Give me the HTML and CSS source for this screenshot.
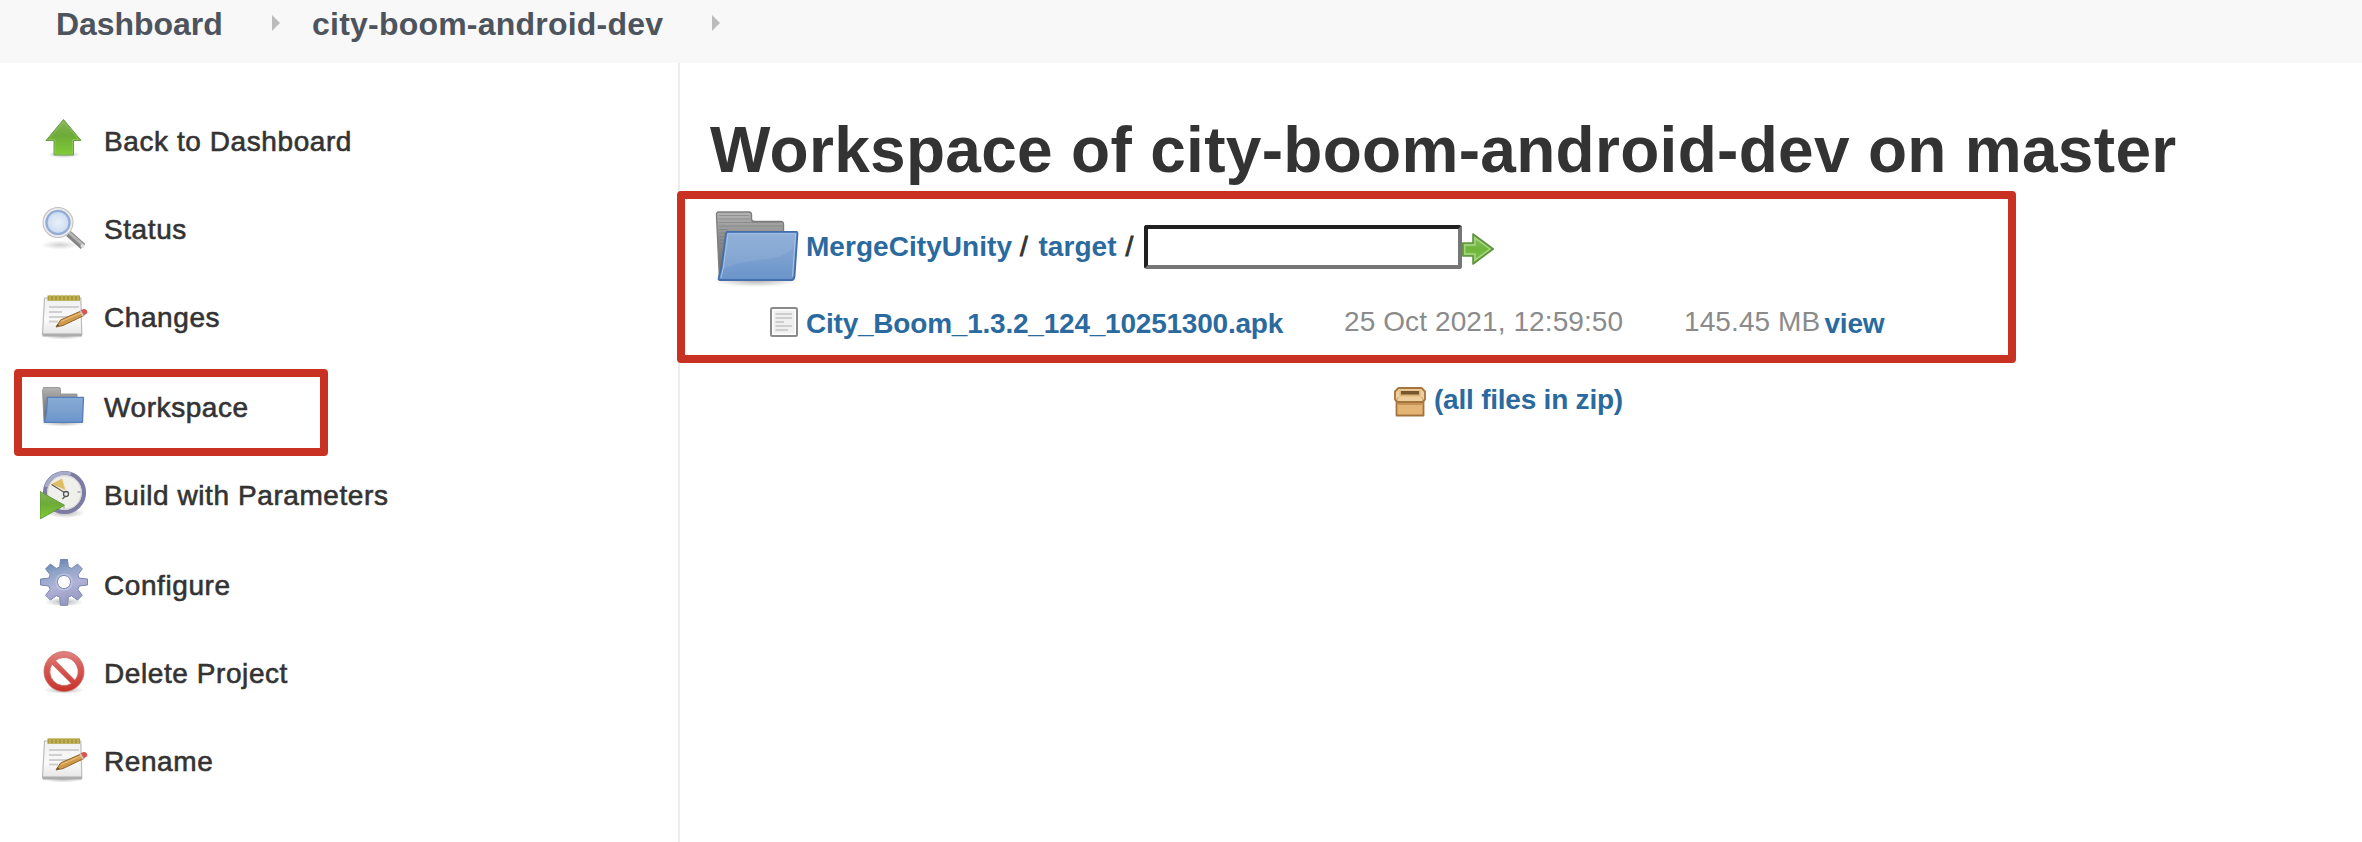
FILE: index.html
```html
<!DOCTYPE html>
<html lang="en">
<head>
<meta charset="utf-8">
<title>Workspace of city-boom-android-dev on master</title>
<link rel="stylesheet" href="styles.css">
</head>
<body>
<svg class="defs" width="0" height="0" aria-hidden="true">
  <defs>
    <linearGradient id="green" x1="0" y1="0" x2="0" y2="1"><stop offset="0" stop-color="#86b457"/><stop offset=".45" stop-color="#6dab38"/><stop offset="1" stop-color="#80cd35"/></linearGradient>
    <linearGradient id="go-green" x1="0" y1="0" x2="0" y2="1"><stop offset="0" stop-color="#8cc36a"/><stop offset=".5" stop-color="#6fb63a"/><stop offset="1" stop-color="#83c24f"/></linearGradient>
    <linearGradient id="blue" x1="0" y1="0" x2="0" y2="1"><stop offset="0" stop-color="#88abd6"/><stop offset=".55" stop-color="#7ba0cf"/><stop offset="1" stop-color="#6a94ca"/></linearGradient>
    <linearGradient id="gray" x1="0" y1="0" x2="0" y2="1"><stop offset="0" stop-color="#b4b4b4"/><stop offset=".4" stop-color="#8b8b8b"/><stop offset="1" stop-color="#666"/></linearGradient>
    <linearGradient id="paper" x1="0" y1="0" x2="0" y2="1"><stop offset="0" stop-color="#f0f0f0"/><stop offset=".6" stop-color="#fafafa"/><stop offset="1" stop-color="#e6e6e6"/></linearGradient>
    <linearGradient id="red" x1="0" y1="0" x2="0" y2="1"><stop offset="0" stop-color="#df8682"/><stop offset=".4" stop-color="#d65a56"/><stop offset="1" stop-color="#c9322b"/></linearGradient>
    <linearGradient id="steel" x1="0" y1="0" x2=".3" y2="1"><stop offset="0" stop-color="#5878a6"/><stop offset=".35" stop-color="#91a4c8"/><stop offset=".65" stop-color="#b1b2d6"/><stop offset="1" stop-color="#9a9cc4"/></linearGradient>
    <radialGradient id="glass"><stop offset="0" stop-color="#e9f1fa"/><stop offset=".65" stop-color="#d2e0f3"/><stop offset="1" stop-color="#b3caea"/></radialGradient>
    <radialGradient id="shade"><stop offset="0" stop-color="#000" stop-opacity=".3"/><stop offset=".6" stop-color="#000" stop-opacity=".12"/><stop offset="1" stop-color="#000" stop-opacity="0"/></radialGradient>
    <symbol id="notepad" viewBox="0 0 48 48">
      <ellipse cx="23" cy="43" rx="21" ry="3.500" fill="url(#shade)"/>
      <path d="M4.500 5h36.300l1 36.500H2.500z" fill="url(#paper)" stroke="#bcbcbc" stroke-width="1.200"/>
      <path d="M2.500 40.500H42V43.500H2.500z" fill="#adadad"/>
      <path d="M7.500 2.500H40V7.800H7.500z" fill="#a99a3b"/>
      <path d="M10 2v6M14 2v6M18 2v6M22 2v6M26 2v6M30 2v6M34 2v6M38 2v6" stroke="#cbbb60" stroke-width="1.300"/>
      <path d="M9 14h30M9 19h13M9 24h20M9 28.500h9" stroke="#cfcfcf" stroke-width="1.800"/>
      <path d="M16 34l4.500-7L41 18l3 4.500-21 10z" fill="#d09a4a" stroke="#93652c" stroke-width="1"/>
      <path d="M21 28.500L42 19.500" stroke="#e8bf7c" stroke-width="1.300"/>
      <path d="M40 17.500l3.500-1.500c3-.5 5 3 3 4.800l-3.500 2z" fill="#dc5450"/>
      <path d="M39.300 17.800l1.500-.7 3 5.500-1.500.8z" fill="#c8c8c0"/>
      <path d="M16 34l1.500-3 2 1.500z" fill="#6b5433"/>
    </symbol>
  </defs>
</svg>

<nav class="crumbs">
  <a class="crumb crumb-home">Dashboard</a>
  <span class="caret"></span>
  <a class="crumb crumb-job">city-boom-android-dev</a>
  <span class="caret"></span>
</nav>

<div class="page">
  <aside class="side">
    <ul class="tasks">
      <li class="task"><svg class="task-icon" viewBox="0 0 48 48">
        <ellipse cx="24" cy="37.500" rx="17" ry="3.500" fill="url(#shade)"/>
        <path d="M23.500 2.500L41 23.500H33.500V38H14V23.500H6z" fill="url(#green)" stroke="#6d9c48" stroke-width="1" stroke-linejoin="round"/>
        <path d="M23.500 5L38.500 22.500H32.500V37H15V22.500H8.500z" fill="none" stroke="#9ccd69" stroke-width=".8" opacity=".7"/>
      </svg><span class="task-label">Back to Dashboard</span></li>
      <li class="task"><svg class="task-icon" viewBox="0 0 48 48">
        <ellipse cx="20" cy="40" rx="19" ry="4.500" fill="url(#shade)" opacity=".6"/>
        <path d="M28.500 28.500L43 41.500" stroke="#858585" stroke-width="7"/>
        <path d="M29 27.500L43.500 40.500" stroke="#b5b5b5" stroke-width="3"/>
        <circle cx="42.500" cy="41" r="2" fill="#ddd"/>
        <circle cx="18" cy="17.500" r="13.500" fill="url(#glass)" stroke="#bebebe" stroke-width="4"/>
        <circle cx="18" cy="17.500" r="13.600" fill="none" stroke="#ececec" stroke-width="1.800"/>
        <circle cx="18" cy="17.500" r="11.500" fill="none" stroke="#8fadd9" stroke-width="2"/>
      </svg><span class="task-label">Status</span></li>
      <li class="task"><svg class="task-icon"><use href="#notepad"/></svg><span class="task-label">Changes</span></li>
      <li class="task"><svg class="task-icon" viewBox="0 0 48 48">
        <ellipse cx="23" cy="40" rx="23" ry="3.500" fill="url(#shade)"/>
        <path d="M3.500 4.500H19q1.500 0 1.500 2v4.500H37v8H10L6 39.500H4L2.500 8z" fill="url(#gray)" stroke="#8d8d8d" stroke-width=".8"/>
        <path d="M7.500 14.300H43.500L42.500 39.300H4.500L6.500 30z" fill="url(#blue)" stroke="#567fb7" stroke-width="1.300" stroke-linejoin="round"/>
      </svg><span class="task-label">Workspace</span><span class="mark mark-task"></span></li>
      <li class="task"><svg class="task-icon" viewBox="0 0 48 48">
        <ellipse cx="25" cy="42" rx="20" ry="5" fill="url(#shade)"/>
        <circle cx="24.500" cy="21.500" r="19.500" fill="#efefec" stroke="#7c7ba3" stroke-width="4.200"/>
        <path d="M6 16A19.500 19.500 0 0 1 31 3.100" fill="none" stroke="#a6abc8" stroke-width="3.500"/>
        <circle cx="24.500" cy="21.500" r="16.800" fill="none" stroke="#d2d2d2"/>
        <path d="M11.500 13L22 7.500 25.500 19z" fill="#dfbd62"/>
        <path d="M11.500 13.500L24.500 21.500M28 22L22.500 28" stroke="#605d52" stroke-width="1.300"/>
        <circle cx="26" cy="23" r="2.500" fill="#eee" stroke="#555" stroke-width="1.300"/>
        <path d="M37.500 21h3M24 35.500v2" stroke="#aaa" stroke-width="1.500"/>
        <path d="M0 20.500L24.500 34.300 0 48z" fill="url(#green)" stroke="#62973c" stroke-width="1"/>
      </svg><span class="task-label">Build with Parameters</span></li>
      <li class="task"><svg class="task-icon task-icon-up" viewBox="0 0 48 48">
        <ellipse cx="24" cy="43" rx="19" ry="4.500" fill="url(#shade)"/>
        <path fill-rule="evenodd" fill="url(#steel)" stroke="#7787b0" stroke-width="1" stroke-linejoin="round" d="M20.500 .5h7l.8 7.500 3.500 1.400L37.500 5l4.800 4.800-4.400 6 1.400 3.400 8.200.8v6l-8.200 1-1.400 3.500 4.400 5.800-4.800 4.800-6-4.400-3.200 1.400-.8 8.200h-7l-.8-8.200-3.400-1.400-5.900 4.400-4.800-4.800 4.500-5.800-1.400-3.500-8.200-1v-6l8.200-.8 1.400-3.400-4.500-6L10.400 5l5.900 4.400L19.700 8zM24 16.500a6.500 6.500 0 1 0 .01 0z"/>
        <circle cx="24" cy="23" r="8" fill="none" stroke="#c5cce2" stroke-width="1.500" opacity=".7"/>
      </svg><span class="task-label">Configure</span></li>
      <li class="task"><svg class="task-icon task-icon-up" viewBox="0 0 48 48">
        <ellipse cx="24" cy="43" rx="20" ry="4" fill="url(#shade)"/>
        <circle cx="24" cy="24.500" r="16.800" fill="#fff"/>
        <path fill="url(#red)" fill-rule="evenodd" stroke="#cc6863" stroke-width=".8" d="M24 4.500a20 20 0 1 0 .01 0zM24 10.500a14 14 0 0 1 10.900 22.800L15.300 13.600A14 14 0 0 1 24 10.500zM12 17.200L31.300 36.500A14 14 0 0 1 12 17.200z"/>
      </svg><span class="task-label">Delete Project</span></li>
      <li class="task"><svg class="task-icon task-icon-nudge"><use href="#notepad"/></svg><span class="task-label">Rename</span></li>
    </ul>
  </aside>

  <main class="main">
    <h1 class="title">Workspace of city-boom-android-dev on master</h1>
    <div class="browser">
      <span class="mark mark-browser"></span>
      <form class="path">
        <svg class="folder" viewBox="0 0 93 80">
          <ellipse cx="44" cy="73.500" rx="43" ry="6.500" fill="url(#shade)"/>
          <path d="M6.500 5H37q2.500 0 2.500 3v4q0 2.500 3 2.500H69q2.500 0 2.500 3V40H16L11 73H7.500L4.500 8q0-3 2-3z" fill="url(#gray)" stroke="#7d7d7d" stroke-width="1.400"/>
          <path d="M7 8.500H37M7 12h31M7 15.500h62M7 19h63M7 22.500h9M7 26h8M7 29.500h7M8 33h6M8 36.500h5" stroke="#777" stroke-width=".9" opacity=".6"/>
          <path d="M15.500 24.800H84.500q1 0 1 1.500L82.500 69.500q-.5 3.500-3 3.500H8q-2 0-1.200-2.500l2.700-10L14 26.500q.2-1.700 1.500-1.700z" fill="url(#blue)" stroke="#426eac" stroke-width="1.800"/>
          <path d="M16.500 27.500H83L80.500 42C62 58 42 48 11.500 62z" fill="#fff" opacity=".08"/>
          <path d="M9 71L11.500 60 16 26.800H83.500L80.500 69.500" fill="none" stroke="#a9c4e5" stroke-width="1"/>
        </svg>
        <a class="link path-root">MergeCityUnity</a><span class="slash slash-a">/</span><a class="link path-dir">target</a><span class="slash slash-b">/</span>
        <input class="pattern" type="text" aria-label="pattern">
        <svg class="go" viewBox="0 0 32 32">
          <path d="M.8 10H11V1L31.200 16 11 31V23H.8z" fill="url(#go-green)" stroke="#5f9440" stroke-width="1.600" stroke-linejoin="round"/>
          <path d="M2.800 12H13V5L28 16 13 27V21H2.800z" fill="none" stroke="#add687" stroke-width="1.300"/>
        </svg>
      </form>
      <div class="file">
        <svg class="doc" viewBox="0 0 28 30">
          <rect x="1" y="1" width="26" height="28" rx="1.500" fill="#fff" stroke="#8a8a8a" stroke-width="2"/>
          <rect x="3.500" y="3.500" width="21" height="23" fill="#f0f0f0"/>
          <path d="M5.500 7h16.500M5.500 11h16.500M5.500 15h8.500M5.500 19h16.500M5.500 23h12.500" stroke="#cfcfcf" stroke-width="1.800"/>
        </svg>
        <a class="link file-name">City_Boom_1.3.2_124_10251300.apk</a>
        <span class="meta file-date">25 Oct 2021, 12:59:50</span>
        <span class="meta file-size">145.45 MB</span>
        <a class="link file-view">view</a>
      </div>
    </div>
    <div class="zip">
      <svg class="box" viewBox="0 0 32 30">
        <path d="M2.500 14H29.500V28.500H2.500z" fill="#e4b676" stroke="#a5743c" stroke-width="1.800" stroke-linejoin="round"/>
        <path d="M4 15.500h24v2.500H4z" fill="#c3935a"/>
        <path d="M4.500 1H27.500L31 4.500V12.500L28.500 15H3.500L1 12.500V4.500z" fill="#efcf9d" stroke="#a5743c" stroke-width="1.800" stroke-linejoin="round"/>
        <path d="M5.500 3.500h21v6h-21z" fill="#dcb478"/>
        <path d="M7 4h18v3.500H7z" fill="#76562a"/>
        <path d="M4.500 10L2.500 13M27.500 10l2 3" stroke="#c99f64"/>
      </svg>
      <a class="link zip-link">(all files in zip)</a>
    </div>
  </main>
</div>
</body>
</html>
```
FILE: styles.css
```css
* { box-sizing: border-box; }
body {
  margin: 0;
  height: 842px;
  overflow: hidden;
  background: #fff;
  color: #333;
  font: 28px/32px "Liberation Sans", Arial, sans-serif;
  display: flex;
  flex-direction: column;
}
svg { display: block; flex: none; }
.defs { position: absolute; }

.crumbs {
  flex: none;
  height: 63px;
  background: #f8f8f8;
  display: flex;
  padding: 6px 0 0 56px;
}
.crumb {
  color: #4d545d;
  font-size: 32px;
  line-height: 36px;
  font-weight: bold;
  white-space: nowrap;
}
.crumb-home { width: 216px; letter-spacing: -.05px; }
.crumb-job { width: 401px; padding-left: 1px; letter-spacing: .22px; }
.caret {
  margin: 9px 31px 0 0;
  border: 8px solid transparent;
  border-left-color: #bbb;
  border-right-width: 0;
  height: 16px;
}

.page { flex: 1; display: flex; }
.side {
  flex: none;
  width: 680px;
  border-right: 2px solid #e9edf0;
  padding: 54px 0 0 40px;
}
.tasks {
  list-style: none;
  margin: 0;
  padding: 0;
  display: grid;
  grid-template-rows: 88px 88px 90px 88px 90px 88px 88px 48px;
}
.task { display: flex; position: relative; }
.task-icon { width: 48px; height: 48px; margin-right: 16px; }
.task-icon-up { margin-top: -2px; }
.task-icon-nudge { margin-top: -1px; }
.task-label {
  padding-top: 9px;
  letter-spacing: .58px;
  -webkit-text-stroke: .6px #333;
  white-space: nowrap;
}

.mark {
  position: absolute;
  border: 8px solid #c93222;
  border-radius: 4px;
}
.mark-task { left: -26px; top: -14px; width: 314px; height: 87px; }
.mark-browser { left: -33px; top: -16px; width: 1339px; height: 172px; }

.main { padding: 50px 0 0 30px; }
.title {
  margin: 0;
  padding-top: 1px;
  height: 72px;
  font-size: 64px;
  line-height: 72px;
  letter-spacing: .3px;
  white-space: nowrap;
}
.browser { position: relative; margin-top: 22px; }
.path { margin: 0; display: flex; height: 98px; padding-left: 2px; }
.folder { width: 93px; height: 80px; }
.link {
  color: #2b6a9f;
  font-weight: bold;
  white-space: nowrap;
}
.path .link, .slash { padding-top: 24px; }
.path-root { width: 214px; padding-left: 1px; letter-spacing: .05px; }
.path-dir { width: 87px; padding-left: 1px; letter-spacing: .05px; }
.slash { -webkit-text-stroke: .9px #333; }
.slash-a { width: 18.500px; padding-left: 1px; }
.slash-b { width: 19.500px; padding-left: 1px; }
.pattern {
  margin: 18px 0 0;
  width: 318px;
  height: 44px;
  border: 4px solid;
  border-color: #212121 #767676 #767676 #212121;
  border-radius: 3px;
  background: #fff;
}
.go { width: 32px; height: 32px; margin-top: 26px; }

.file {
  display: grid;
  grid-template-columns: 36px 538px 340px 140.500px auto;
  padding-left: 60px;
}
.doc { width: 28px; height: 30px; margin-top: 2px; }
.file .link { padding-top: 3px; }
.file-name { letter-spacing: -.22px; }
.meta { padding-top: 1px; color: #8b8b8b; white-space: nowrap; letter-spacing: .1px; }
.file-view { letter-spacing: -.2px; }

.zip { display: flex; margin-top: 42px; padding-left: 684px; }
.box { width: 32px; height: 30px; margin: 5px 8px 0 0; }
.zip-link { padding-top: 2px; letter-spacing: -.22px; }
```
